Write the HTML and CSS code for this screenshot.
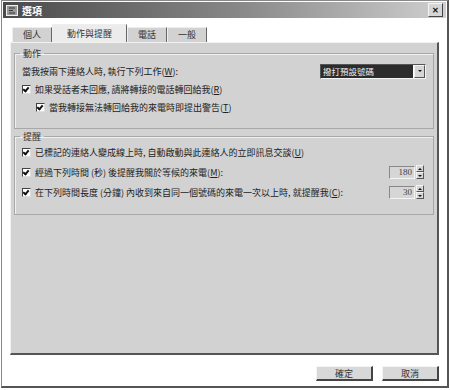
FILE: index.html
```html
<!DOCTYPE html>
<html>
<head>
	<meta charset="utf-8">
	<title>選項</title>
	<link rel="stylesheet" href="styles.css">
</head>
<body>
	<div class="window">
		<div class="titlebar">
			<span class="app-icon">
				<svg width="12" height="11" viewBox="0 0 12 11"><rect x="0.5" y="0.5" width="11" height="10" fill="#9a9a9a" stroke="#eee"/><path d="M3 3h6M3 5.5h4M3 8h6" stroke="#333" stroke-width="1.2"/></svg>
			</span>
			<span class="title">選項</span>
			<span class="close">✕</span>
		</div>
		<div class="content">
			<ul class="tabs">
				<li>個人</li>
				<li class="active">動作與提醒</li>
				<li>電話</li>
				<li>一般</li>
			</ul>
			<div class="panel">
				<fieldset class="group first">
					<legend>動作</legend>
					<div class="row">
						<span>當我按兩下連絡人時, 執行下列工作(<u>W</u>):</span>
						<div class="select">
							<span class="select-text">撥打預設號碼</span>
							<span class="select-arrow"><b class="down"></b></span>
						</div>
					</div>
					<div class="row"><span class="check"></span>如果受話者未回應, 請將轉接的電話轉回給我(<u>R</u>)</div>
					<div class="row indent"><span class="check"></span>當我轉接無法轉回給我的來電時即提出警告(<u>T</u>)</div>
				</fieldset>
				<fieldset class="group second">
					<legend>提醒</legend>
					<div class="row wide"><span class="check"></span>已標記的連絡人變成線上時, 自動啟動與此連絡人的立即訊息交談(<u>U</u>)</div>
					<div class="row wide">
						<span><span class="check"></span>經過下列時間 (秒) 後提醒我關於等候的來電(<u>M</u>):</span>
						<div class="spin"><span class="spin-value">180</span><span class="spin-btns"><i><b class="up"></b></i><i><b class="down"></b></i></span></div>
					</div>
					<div class="row wide">
						<span><span class="check"></span>在下列時間長度 (分鐘) 內收到來自同一個號碼的來電一次以上時, 就提醒我(<u>C</u>):</span>
						<div class="spin"><span class="spin-value">30</span><span class="spin-btns"><i><b class="up"></b></i><i><b class="down"></b></i></span></div>
					</div>
				</fieldset>
			</div>
			<div class="buttons">
				<button class="button">確定</button>
				<button class="button">取消</button>
			</div>
		</div>
	</div>
</body>
</html>
```
FILE: styles.css
```css
html, body {
	margin: 0;
	background: #fff;
}
body {
	font-family: "Noto Sans CJK TC", "Liberation Sans", sans-serif;
	font-size: 9px;
	color: #222;
}
.window {
	box-sizing: border-box;
	width: 448px;
	height: 388px;
	margin-left: 1px;
	border: 1px solid #888;
	border-right: 2px solid #555;
	border-bottom: 2px solid #555;
	display: flex;
	flex-direction: column;
}
.titlebar {
	height: 16px;
	margin: 1px;
	background: linear-gradient(to right, #4a4a4a, #8a8a8a 55%, #cfcfcf);
	display: flex;
	align-items: center;
	padding: 0 3px;
}
.app-icon {
	display: flex;
	margin-right: 4px;
}
.title {
	color: #fff;
	font-weight: bold;
	font-size: 10px;
}
.close {
	margin-left: auto;
	width: 13px;
	height: 12px;
	background: #d6d6d6;
	border: 1px solid #f4f4f4;
	border-right-color: #444;
	border-bottom-color: #444;
	font-size: 8px;
	line-height: 12px;
	text-align: center;
	font-weight: bold;
	color: #111;
}
.content {
	flex: 1;
	display: flex;
	flex-direction: column;
	padding: 6px 8px 5px 8px;
}
.tabs {
	list-style: none;
	margin: 0;
	padding: 0 0 0 2px;
	display: flex;
	align-items: flex-end;
	height: 17px;
}
.tabs li {
	height: 14px;
	line-height: 14px;
	padding: 0 10px;
	background: #d2d2d2;
	border-top: 1px solid #eee;
	border-left: 1px solid #eee;
	border-right: 1px solid #666;
	font-size: 9px;
	color: #333;
}
.tabs li.active {
	height: 17px;
	line-height: 17px;
	background: #ececec;
	padding: 0 14px;
}
.panel {
	flex: 1;
	background: #d2d2d2;
	border-top: 1px solid #f2f2f2;
	border-left: 1px solid #f2f2f2;
	border-right: 2px solid #555;
	border-bottom: 2px solid #555;
	padding: 4px 3px;
}
.group {
	margin: 0;
	padding: 2px 7px 4px 7px;
	border: 1px solid #a8a8a8;
	box-shadow: inset 1px 1px 0 #f0f0f0;
}
.group.first {
	padding-bottom: 12px;
	margin-bottom: 1px;
}
.group.second {
	padding-top: 0;
	padding-bottom: 12px;
}
.group.second .row:first-of-type {
	margin-top: -1px;
}
.group legend {
	padding: 0 3px;
	margin-left: -2px;
	color: #333;
}
.row {
	display: flex;
	align-items: center;
	justify-content: space-between;
	height: 18px;
}
.row.wide {
	height: 20px;
}
.row:not(:has(.select)):not(:has(.spin)) {
	justify-content: flex-start;
}
.row.indent {
	padding-left: 14px;
}
.check {
	display: inline-block;
	box-sizing: border-box;
	width: 9px;
	height: 9px;
	background: #fff;
	border: 1px solid #444;
	border-right-color: #ddd;
	border-bottom-color: #ddd;
	vertical-align: -1px;
	margin-right: 4px;
	position: relative;
}
.check::after {
	content: "";
	position: absolute;
	left: 1px;
	top: 0;
	width: 2px;
	height: 4px;
	border: solid #111;
	border-width: 0 2px 2px 0;
	transform: rotate(40deg);
}
.select {
	display: flex;
	width: 104px;
	height: 13px;
	border: 1px solid #555;
	border-right-color: #f4f4f4;
	border-bottom-color: #f4f4f4;
	background: #fff;
}
.select-text {
	flex: 1;
	background: #2c2c2c;
	color: #eee;
	font-size: 8.5px;
	line-height: 13px;
	padding-left: 2px;
	margin: 0 1px 0 0;
}
.select-arrow, .spin-btns i {
	display: flex;
	align-items: center;
	justify-content: center;
	box-sizing: border-box;
	background: #d6d6d6;
	border: 1px solid #f4f4f4;
	border-right-color: #555;
	border-bottom-color: #555;
}
.select-arrow {
	width: 11px;
}
.up, .down {
	width: 0;
	height: 0;
	border-left: 2px solid transparent;
	border-right: 2px solid transparent;
}
.down {
	border-top: 2px solid #111;
}
.up {
	border-bottom: 2px solid #111;
}
.spin {
	display: flex;
	align-items: center;
	margin-right: 2px;
}
.spin-value {
	width: 22px;
	height: 11px;
	line-height: 11px;
	text-align: right;
	padding-right: 2px;
	background: #d6d6d6;
	border: 1px solid #888;
	border-right-color: #f4f4f4;
	border-bottom-color: #f4f4f4;
	font-family: "Liberation Serif", serif;
	font-size: 9px;
	color: #444;
}
.spin-btns {
	display: flex;
	flex-direction: column;
	margin-left: 1px;
}
.spin-btns i {
	width: 8px;
	height: 7px;
}
.buttons {
	display: flex;
	justify-content: flex-end;
	gap: 9px;
	padding-top: 11px;
}
.button {
	width: 57px;
	height: 15px;
	padding: 0;
	background: #d8d8d8;
	border: 1px solid #f4f4f4;
	border-right: 2px solid #444;
	border-bottom: 2px solid #444;
	font-family: inherit;
	font-size: 9px;
	color: #333;
}
```
